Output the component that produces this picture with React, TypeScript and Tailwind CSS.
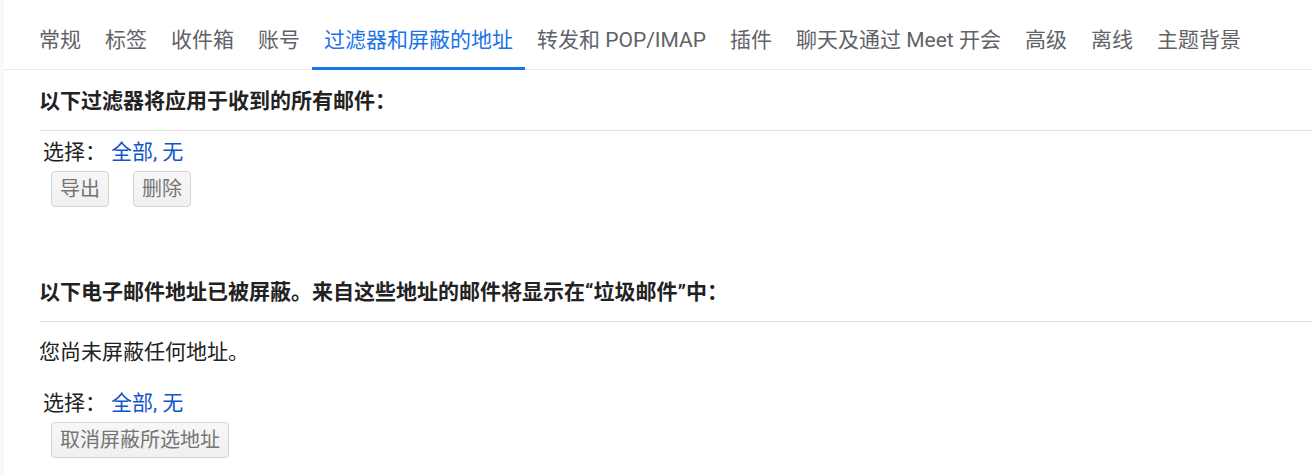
import React from "react";

const tabs = [
  "常规",
  "标签",
  "收件箱",
  "账号",
  "过滤器和屏蔽的地址",
  "转发和 POP/IMAP",
  "插件",
  "聊天及通过 Meet 开会",
  "高级",
  "离线",
  "主题背景",
];

function SelectRow() {
  return (
    <div className="flex items-center h-[26px] pl-[4px] text-[21px] leading-[26px] text-[#222]">
      <span>选择：</span>
      <span className="ml-[5px] text-[#1155cc]">全部</span>
      <span className="text-[#1155cc]">,&nbsp;</span>
      <span className="text-[#1155cc]">无</span>
    </div>
  );
}

function Btn({ children }: { children: React.ReactNode }) {
  return (
    <button className="h-[36px] px-[8px] rounded-[4px] border border-[#d3d3d3] bg-gradient-to-b from-[#f7f7f7] to-[#f0f0f0] text-[20px] leading-[26px] text-[#757575]">
      {children}
    </button>
  );
}

export default function App() {
  return (
    <div
      className="flex min-h-[474px] bg-white"
      style={{ fontFamily: 'Roboto, "Noto Sans CJK SC", sans-serif' }}
    >
      <div className="w-[4px] shrink-0 bg-[#f6f8fc]" />
      <div className="flex-1 min-w-0">
        <nav className="flex border-b border-[#ebebeb] pl-[23px]">
          {tabs.map((t, i) => {
            const active = i === 4;
            return (
              <div
                key={t}
                className={
                  "-mb-px px-[12px] pt-[26px] pb-[13px] border-b-[3px] text-[21px] leading-[28px] whitespace-nowrap " +
                  (active
                    ? "border-[#1a73e8] text-[#1a73e8]"
                    : "border-transparent text-[#5f6368]")
                }
              >
                {t}
              </div>
            );
          })}
        </nav>

        <div className="pl-[35px]">
          <h2 className="mt-[17px] pb-[15px] border-b border-[#e2e2e2] text-[21px] leading-[28px] font-bold text-[#222]">
            以下过滤器将应用于收到的所有邮件：
          </h2>
          <div className="mt-[8px]">
            <SelectRow />
          </div>
          <div className="mt-[6px] pl-[12px] flex gap-[24px]">
            <Btn>导出</Btn>
            <Btn>删除</Btn>
          </div>

          <h2 className="mt-[71px] pb-[15px] border-b border-[#e2e2e2] text-[21px] leading-[28px] font-bold text-[#222]">
            以下电子邮件地址已被屏蔽。来自这些地址的邮件将显示在“垃圾邮件”中：
          </h2>
          <p className="mt-[17px] text-[21px] leading-[26px] text-[#222]">
            您尚未屏蔽任何地址。
          </p>
          <div className="mt-[25px]">
            <SelectRow />
          </div>
          <div className="mt-[6px] pl-[12px] flex">
            <Btn>取消屏蔽所选地址</Btn>
          </div>
        </div>
      </div>
    </div>
  );
}
